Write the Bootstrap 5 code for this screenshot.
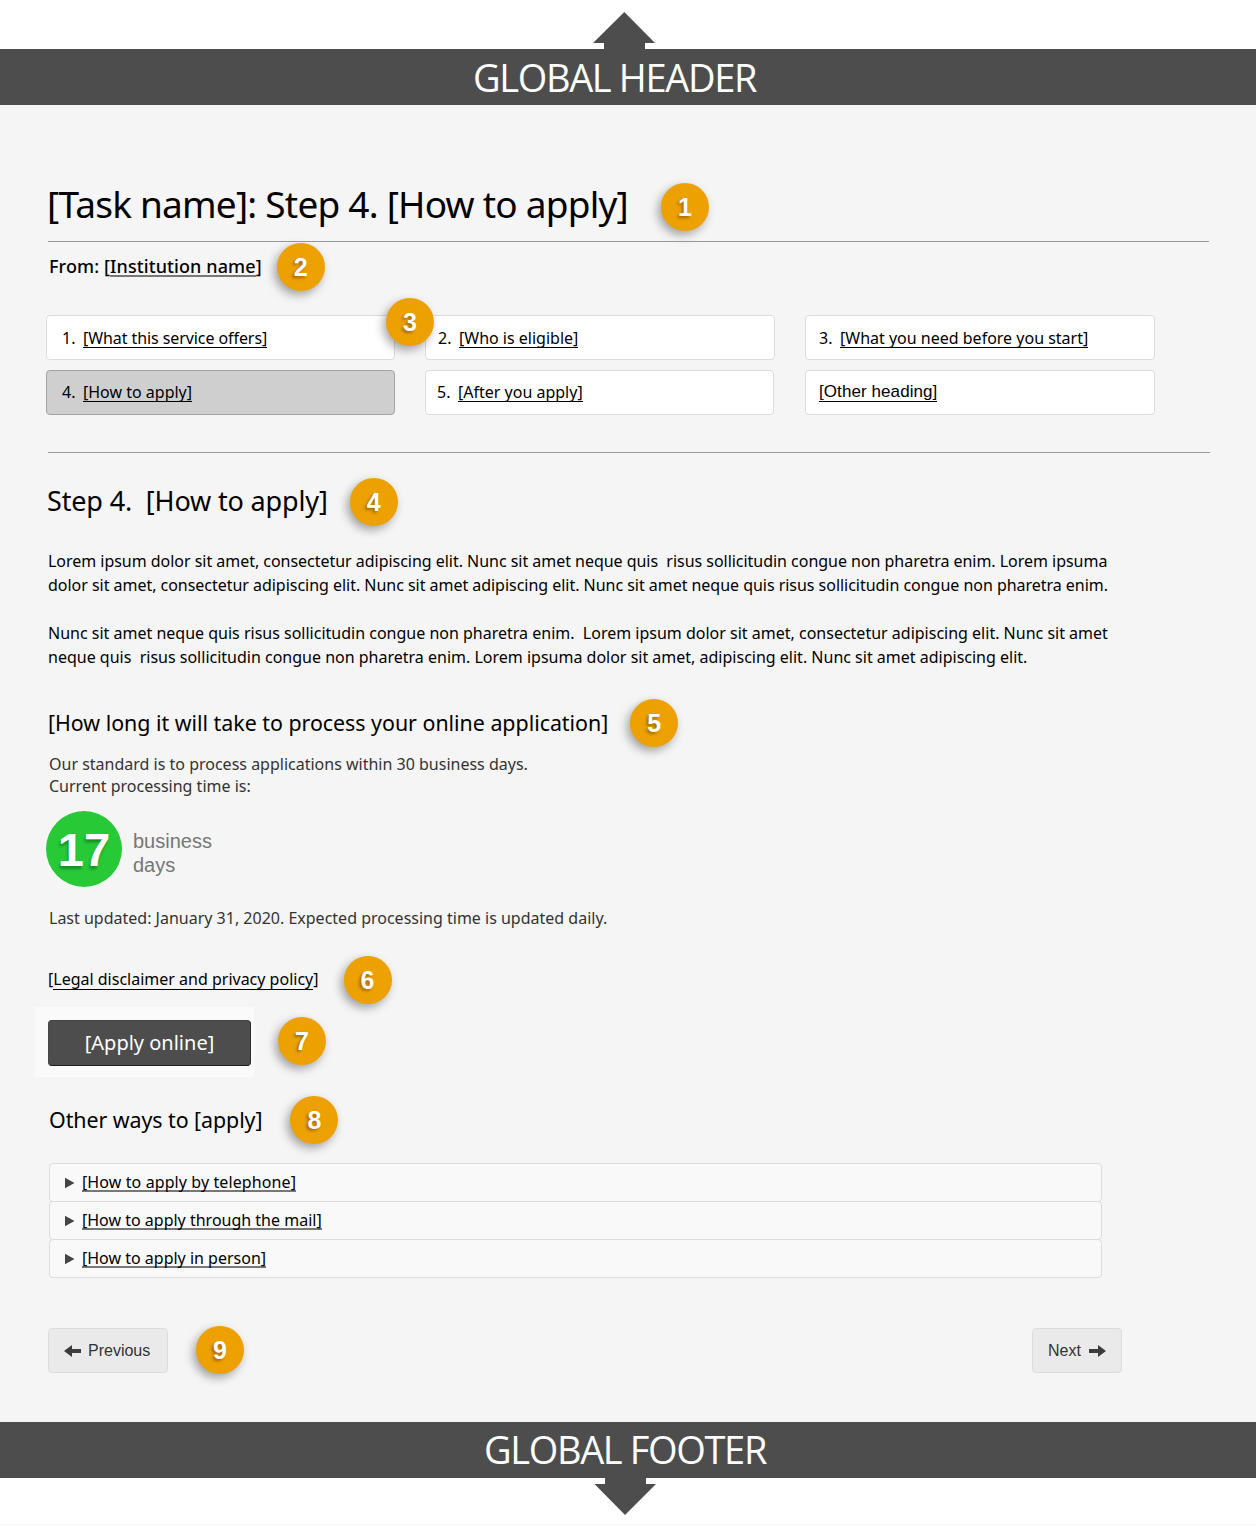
<!DOCTYPE html>
<html lang="en">
<head>
<meta charset="utf-8">
<meta name="viewport" content="width=device-width, initial-scale=1">
<title>[Task name]: Step 4. [How to apply]</title>
<link href="https://cdn.jsdelivr.net/npm/bootstrap@5.3.0/dist/css/bootstrap.min.css" rel="stylesheet">
<style>
body{font-family:"Noto Sans","Open Sans",sans-serif;font-size:16px;line-height:24px;color:#000;background:#fff;min-height:1527px}
a{color:#000;text-decoration:none}
.bar{height:56px;background:#4d4d4d;color:#fff;font:38px/56px "Open Sans","Noto Sans",sans-serif;letter-spacing:-1.35px}
.bar-top{padding:0 0 0 473px}
.bar-bottom{padding-left:484px;line-height:54px}
.arrow{display:block;width:62px;height:37px;fill:#4d4d4d}
.arrow-up{margin:12px 0 0 593px}
.arrow-down{margin-left:594px}
.page-end{height:1px;margin:9px 0 0;background:#f5f5f5}
main{background:#f5f5f5;padding:78px 46px 48px 48px}
.line-row{height:48px}
.rule{height:1px;background:#999}
h1,h2,h3{font-weight:400;margin:0;white-space:pre}
h1{font-size:37px;line-height:48px;letter-spacing:-.78px;padding-bottom:7px;margin-left:-1px}
h2{font-size:27px;line-height:40px;letter-spacing:-.15px;padding-bottom:2px;margin-left:-1px}
h3{font-size:21.4px;line-height:32px;letter-spacing:-.02px}
.num{width:48px;height:48px;flex:none;border-radius:50%;background:#eda100;color:#fff;font:bold 25px/49px "Liberation Sans",Arial,sans-serif;text-align:center;text-shadow:-2px 2px 3px rgba(90,50,0,.5);box-shadow:-3px 4px 10px rgba(0,0,0,.34)}
.from{font-size:18px;font-weight:500;letter-spacing:.1px;padding:0 0 2px 1px}
.u{border-bottom:1px solid #000;display:inline-block;line-height:21px;height:20px;white-space:nowrap}
.u-grey{border-bottom:2px solid #777}
.from .u,.legal .u{line-height:19px;height:auto}
.from .u{line-height:18px}
.steps{display:grid;grid-template-columns:349px 350px 350px;column-gap:30px;row-gap:10px;margin:24px 0 0 -2px;position:relative}
.step{height:45px;background:#fff;border:1px solid #dcdcdc;border-radius:4px;padding:0 13px}
.step .no{width:21px}
.step.now{background:#cfcfcf;border-color:#a3a3a3}
.step .u{margin-top:1px}
.step.low{padding-bottom:2px}
.num-over{position:absolute;left:340px;top:-17px}
.helv{font-family:"Liberation Sans",Arial,sans-serif}
.copy p{margin:0 0 24px;white-space:pre}
.note{color:#333;line-height:22px;padding-left:1px}
.days{width:76px;height:76px;border-radius:50%;background:#28c937;color:#fff;font:bold 47px/78px "Liberation Sans",Arial,sans-serif;text-align:center;text-shadow:-1px 3px 3px rgba(0,70,0,.45);margin-left:-2px}
.unit{color:#777;font:20px/24px "Liberation Sans",Arial,sans-serif;padding-top:18px;margin-left:11px}
.legal{padding-bottom:2px}
.apply-pad{background:#fafafa;margin-left:-13px;padding:13px 3px 11px 13px}
.apply{display:block;width:203px;height:46px;background:#4d4d4d;color:#fff;border:1px solid #444;border-bottom-color:#1f1f1f;border-right-color:#2a2a2a;border-radius:4px;font-size:20px;padding:0}
.ways{width:1053px;margin:19px 0 0 1px}
.way{height:39px;background:#f9f9f9;border:1px solid #dcdcdc;border-radius:4px;padding:0 0 0 15px}
.way + .way{margin-top:-1px}
.way svg{width:10px;height:12px;fill:#444;margin-right:7px}
.way .u{margin-bottom:2px}
.pager{height:45px;background:#eaeaea;border:1px solid #dcdcdc;border-radius:4px;color:#333;font:16px/43px "Liberation Sans",Arial,sans-serif;padding:0 15px}
.pager svg{width:17px;height:12px;fill:#3c3c3c;margin-top:2px}
</style>
</head>
<body>
<header>
  <svg class="arrow arrow-up" viewBox="0 0 62 37"><path d="M31.3 0 62 31H52v6H11v-6H0z"/></svg>
  <div class="bar bar-top">GLOBAL HEADER</div>
</header>
<main>
  <div class="line-row d-flex align-items-center"><h1>[Task name]: Step 4. [How to apply]</h1><span class="num" style="margin-left:33px">1</span></div>
  <div class="rule" style="width:1161px;margin-top:10px"></div>
  <div class="line-row d-flex align-items-center" style="margin-top:1px"><span class="from">From: [<a href="#" class="u u-grey">Institution name</a>]</span><span class="num" style="margin-left:15px">2</span></div>

  <nav class="steps">
    <div class="step d-flex align-items-center" style="padding-left:15px"><span class="no">1.</span><a href="#" class="u" style="letter-spacing:-.08px">[What this service offers]</a></div>
    <div class="step d-flex align-items-center" style="padding-left:12px"><span class="no">2.</span><a href="#" class="u">[Who is eligible]</a></div>
    <div class="step d-flex align-items-center"><span class="no">3.</span><a href="#" class="u">[What you need before you start]</a></div>
    <div class="step now low d-flex align-items-center" style="padding-left:15px"><span class="no">4.</span><a href="#" class="u">[How to apply]</a></div>
    <div class="step low d-flex align-items-center" style="padding-left:11px;margin-right:1px"><span class="no">5.</span><a href="#" class="u">[After you apply]</a></div>
    <div class="step low d-flex align-items-center"><a href="#" class="u helv" style="font-size:17px;letter-spacing:.08px;line-height:19px">[Other heading]</a></div>
    <span class="num num-over">3</span>
  </nav>
  <div class="rule" style="width:1162px;margin-top:37px"></div>

  <div class="line-row d-flex align-items-center" style="margin-top:25px"><h2>Step 4.  [How to apply]</h2><span class="num" style="margin-left:22px">4</span></div>
  <div class="copy" style="margin-top:23px">
<p style="letter-spacing:-.03px">Lorem ipsum dolor sit amet, consectetur adipiscing elit. Nunc sit amet neque quis  risus sollicitudin congue non pharetra enim. Lorem ipsuma
dolor sit amet, consectetur adipiscing elit. Nunc sit amet adipiscing elit. Nunc sit amet neque quis risus sollicitudin congue non pharetra enim.</p>
<p class="mb-0">Nunc sit amet neque quis risus sollicitudin congue non pharetra enim.  Lorem ipsum dolor sit amet, consectetur adipiscing elit. Nunc sit amet
neque quis  risus sollicitudin congue non pharetra enim. Lorem ipsuma dolor sit amet, adipiscing elit. Nunc sit amet adipiscing elit.</p>
  </div>

  <div class="line-row d-flex align-items-center" style="margin-top:30px"><h3>[How long it will take to process your online application]</h3><span class="num" style="margin-left:22px">5</span></div>
  <div class="note" style="margin-top:6px">Our standard is to process applications within 30 business days.<br>Current processing time is:</div>
  <div class="d-flex" style="margin-top:14px;height:76px"><div class="days">17</div><div class="unit">business<br>days</div></div>
  <div class="note" style="margin-top:20px">Last updated: January 31, 2020. Expected processing time is updated daily.</div>

  <div class="line-row d-flex align-items-center" style="margin-top:27px"><span class="legal">[<a href="#" class="u">Legal disclaimer and privacy policy</a>]</span><span class="num" style="margin-left:25px">6</span></div>
  <div class="d-flex align-items-start" style="margin-top:3px;height:70px"><div class="apply-pad"><button type="button" class="btn apply">[Apply online]</button></div><span class="num" style="margin:10px 0 0 24px">7</span></div>

  <div class="line-row d-flex align-items-center" style="margin-top:19px"><h3 style="margin-left:1px;letter-spacing:-.06px">Other ways to [apply]</h3><span class="num" style="margin-left:28px">8</span></div>
  <div class="ways">
    <div class="way d-flex align-items-center"><svg viewBox="0 0 10 12"><path d="M0 .8 9.5 6 0 11.2z"/></svg><a href="#" class="u u-grey" style="letter-spacing:.1px">[How to apply by telephone]</a></div>
    <div class="way d-flex align-items-center"><svg viewBox="0 0 10 12"><path d="M0 .8 9.5 6 0 11.2z"/></svg><a href="#" class="u u-grey">[How to apply through the mail]</a></div>
    <div class="way d-flex align-items-center"><svg viewBox="0 0 10 12"><path d="M0 .8 9.5 6 0 11.2z"/></svg><a href="#" class="u u-grey">[How to apply in person]</a></div>
  </div>

  <div class="line-row d-flex align-items-center" style="margin-top:48px;width:1074px">
    <a href="#" class="pager d-flex align-items-center" style="width:120px"><svg viewBox="0 0 17 12" style="margin-right:7px"><path d="M0 6 8 0v4h9v4H8v4z"/></svg>Previous</a>
    <span class="num" style="margin-left:28px">9</span>
    <a href="#" class="pager d-flex align-items-center ms-auto" style="width:90px">Next<svg viewBox="0 0 17 12" style="margin-left:8px"><path d="M17 6 9 0v4H0v4h9v4z"/></svg></a>
  </div>
</main>
<footer>
  <div class="bar bar-bottom">GLOBAL FOOTER</div>
  <svg class="arrow arrow-down" viewBox="0 0 62 37"><path d="M11 0h41v6h10L31 37 .5 6H11z"/></svg>
  <div class="page-end"></div>
</footer>
<script src="https://cdn.jsdelivr.net/npm/bootstrap@5.3.0/dist/js/bootstrap.bundle.min.js"></script>
</body>
</html>
